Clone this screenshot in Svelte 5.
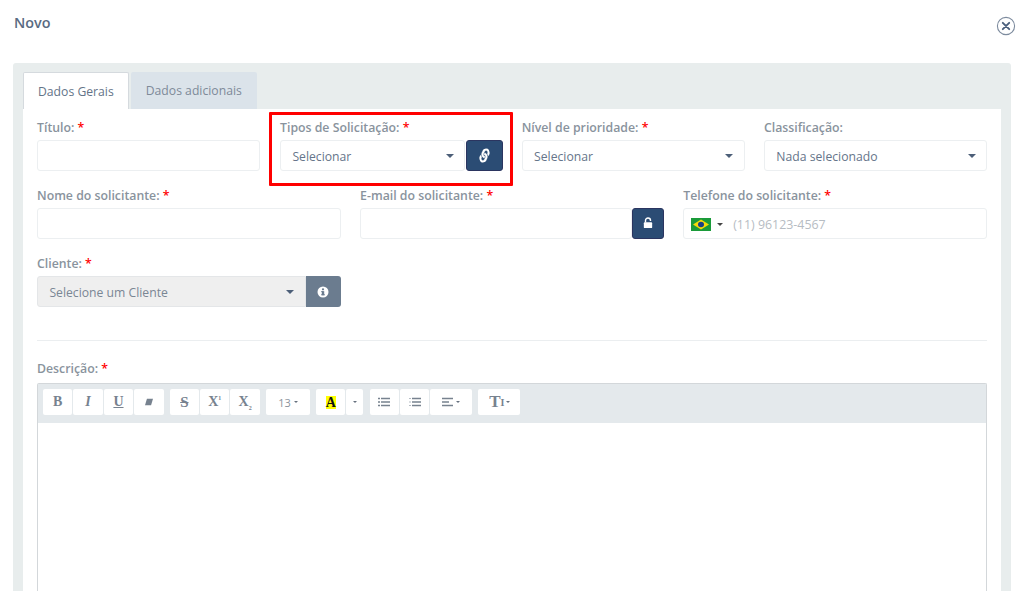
<script lang="ts">
  const rowTwo = [
    { label: 'Nome do solicitante:', kind: 'text' },
    { label: 'E-mail do solicitante:', kind: 'lock' },
    { label: 'Telefone do solicitante:', kind: 'phone' },
  ];
</script>

{#snippet caret()}
  <span class="caret"></span>
{/snippet}

{#snippet required(text: string)}
  <div class="label">{text} <span class="star">*</span></div>
{/snippet}

<div class="page">
  <header class="head">
    <h1>Novo</h1>
    <svg class="close" viewBox="0 0 20 20" width="20" height="20" aria-label="Fechar">
      <circle cx="10" cy="10" r="8.6" fill="none" stroke="#7d8b9e" stroke-width="1.1" />
      <path d="M6.8 6.8 13.2 13.2M13.2 6.8 6.8 13.2" stroke="#4a5f7c" stroke-width="1.9" stroke-linecap="round" />
    </svg>
  </header>

  <section class="panel">
    <nav class="tabs">
      <button class="tab active">Dados Gerais</button>
      <button class="tab">Dados adicionais</button>
    </nav>

    <div class="content">
      <div class="row four">
        <div class="field">
          {@render required('Título:')}
          <div class="input"></div>
        </div>
        <div class="field marked">
          {@render required('Tipos de Solicitação:')}
          <div class="group">
            <div class="input select"><span>Selecionar</span>{@render caret()}</div>
            <button class="addon dark" aria-label="Vincular">
              <svg class="chain" viewBox="0 0 512 512" width="13" height="13">
                <path fill="#fff" stroke="#fff" stroke-width="14" d="M326.6 185.4c59.7 59.8 58.9 155.7.4 214.6l-67.2 67.2c-59.3 59.3-155.7 59.3-215 0-59.3-59.3-59.3-155.7 0-215l37.1-37.1c9.8-9.8 26.8-3.3 27.3 10.6.6 17.7 3.8 35.5 9.7 52.7 2 5.8.6 12.3-3.8 16.6l-13.1 13.1c-28 28-28.9 73.7-1.2 102 28 28.6 74.1 28.7 102.3.5l67.2-67.2c28.2-28.2 28.1-73.8 0-101.8-3.7-3.7-7.4-6.6-10.3-8.6-4.2-2.9-6.8-7.6-7-12.7-.4-10.6 3.4-21.5 11.8-29.9l21-21c5.5-5.5 14.2-6.2 20.6-1.7 7.3 5.1 14.2 10.8 20.5 17.1zM467.5 44.4c-59.3-59.3-155.7-59.3-215 0L185.3 111.6c-.1.1-.3.3-.4.4-58.5 58.9-59.3 154.8.4 214.6 6.3 6.3 13.2 12 20.5 17.1 6.4 4.5 15.1 3.8 20.6-1.7l21-21c8.4-8.4 12.2-19.3 11.8-29.9-.2-5.1-2.8-9.8-7-12.7-2.9-2-6.6-4.9-10.3-8.6-28.1-28-28.2-73.6 0-101.8l67.2-67.2c28.2-28.2 74.3-28.1 102.3.5 27.7 28.3 26.8 74-1.2 102l-13.1 13.1c-4.4 4.3-5.8 10.8-3.8 16.6 5.9 17.2 9.1 35 9.7 52.7.5 13.9 17.5 20.4 27.3 10.6l37.1-37.1c59.3-59.3 59.3-155.7 0-215z" />
              </svg>
            </button>
          </div>
        </div>
        <div class="field">
          {@render required('Nível de prioridade:')}
          <div class="input select"><span>Selecionar</span>{@render caret()}</div>
        </div>
        <div class="field">
          <div class="label">Classificação:</div>
          <div class="input select"><span>Nada selecionado</span>{@render caret()}</div>
        </div>
      </div>

      <div class="row three">
        {#each rowTwo as f}
          <div class="field">
            {@render required(f.label)}
            {#if f.kind === 'text'}
              <div class="input"></div>
            {:else if f.kind === 'lock'}
              <div class="group">
                <div class="input"></div>
                <button class="addon dark lock" aria-label="Bloquear">
                  <svg viewBox="0 0 12 14" width="10" height="12">
                    <path fill="none" stroke="#fff" stroke-width="1.7" d="M3 6.5V4a3 3 0 0 1 6 0v.6" />
                    <rect x="1" y="6.2" width="10" height="6.8" rx="1" fill="#fff" />
                  </svg>
                </button>
              </div>
            {:else}
              <div class="input phone">
                <svg class="flag" viewBox="0 0 20 14" preserveAspectRatio="none">
                  <rect width="20" height="14" fill="#1a9b3a" />
                  <path d="M10 1.6 18 7 10 12.4 2 7z" fill="#f5d90a" />
                  <circle cx="10" cy="7" r="3" fill="#1b3f86" />
                </svg>
                <span class="caret small"></span>
                <span class="placeholder">(11) 96123-4567</span>
              </div>
            {/if}
          </div>
        {/each}
      </div>

      <div class="row three">
        <div class="field">
          {@render required('Cliente:')}
          <div class="group">
            <div class="input select disabled"><span>Selecione um Cliente</span>{@render caret()}</div>
            <button class="addon grey" aria-label="Informação">
              <svg viewBox="0 0 14 14" width="12" height="12">
                <circle cx="7" cy="7" r="6.4" fill="#fff" />
                <rect x="5.6" y="6" width="2.8" height="4.8" fill="#6b7c8f" />
                <rect x="4.9" y="9.6" width="4.2" height="1.2" fill="#6b7c8f" />
                <rect x="4.9" y="6" width="2" height="1.1" fill="#6b7c8f" />
                <circle cx="7" cy="3.9" r="1.3" fill="#6b7c8f" />
              </svg>
            </button>
          </div>
        </div>
      </div>

      <hr />

      {@render required('Descrição:')}
      <div class="editor">
        <div class="toolbar">
          <div class="btns">
            <button class="tb serif bold">B</button>
            <button class="tb serif italic">I</button>
            <button class="tb serif under">U</button>
            <button class="tb" aria-label="Limpar">
              <svg viewBox="0 0 12 10" width="10" height="8"><path fill="#77828f" d="M3.4 1H11L8.6 9H1z" /></svg>
            </button>
          </div>
          <div class="btns">
            <button class="tb serif strike">S</button>
            <button class="tb serif bold"><span>X<sup>1</sup></span></button>
            <button class="tb serif bold"><span>X<sub>2</sub></span></button>
          </div>
          <div class="btns">
            <button class="tb size"><span>13</span><span class="mini"></span></button>
          </div>
          <div class="btns">
            <button class="tb color"><span class="hl">A</span></button>
            <button class="tb narrow"><span class="mini"></span></button>
          </div>
          <div class="btns">
            <button class="tb" aria-label="Lista">
              <svg viewBox="0 0 12 10" width="12" height="10"><path stroke="#77828f" stroke-width="1.5" d="M0 1.5h2M3 1.5h9M0 5h2M3 5h9M0 8.5h2M3 8.5h9" /></svg>
            </button>
            <button class="tb" aria-label="Lista numerada">
              <svg viewBox="0 0 12 10" width="12" height="10"><path stroke="#77828f" stroke-width="1.5" d="M3 1.5h9M3 5h9M3 8.5h9" /><path stroke="#b4bbc3" stroke-width="1.2" d="M0 1.5h2M0 5h2M0 8.5h2" /></svg>
            </button>
            <button class="tb wide" aria-label="Alinhar">
              <svg viewBox="0 0 11 10" width="11" height="10"><path stroke="#77828f" stroke-width="1.5" d="M0 1.5h11M0 5h7M0 8.5h11" /></svg>
              <span class="mini"></span>
            </button>
          </div>
          <div class="btns">
            <button class="tb wide serif bold"><span class="tt">T</span><span class="updown">I</span><span class="mini"></span></button>
          </div>
        </div>
        <div class="body"></div>
      </div>
    </div>
  </section>
</div>

<style>
  :global(body) {
    margin: 0;
    background: #fff;
    font-family: 'Open Sans', 'Noto Sans', sans-serif;
    font-size: 12px;
    color: #6b7888;
  }

  .page {
    height: 591px;
    overflow: hidden;
    padding: 0 13px;
    box-sizing: border-box;
  }

  .head {
    display: flex;
    justify-content: space-between;
    align-items: flex-start;
    height: 63px;
  }

  h1 {
    margin: 13px 0 0 1px;
    font-size: 14.4px;
    line-height: 20px;
    font-weight: 600;
    color: #5a6b82;
  }

  .close {
    margin: 16px -5px 0 0;
  }

  .panel {
    background: #e8eded;
    border-radius: 3px 3px 0 0;
    padding: 9px 10px 0;
    height: 528px;
    box-sizing: border-box;
  }

  .tabs {
    display: flex;
    gap: 2px;
    height: 37px;
  }

  .tab {
    font: inherit;
    font-size: 12.2px;
    border: 0;
    padding: 0 15px;
    background: #dbe3ea;
    color: #7e8a99;
    border-radius: 2px 2px 0 0;
  }

  .tab.active {
    background: #fff;
    color: #647488;
    border: 1px solid #d5dade;
    border-bottom: 0;
    padding: 0 14px;
  }

  .content {
    background: #fff;
    padding: 10px 14px 0;
    height: 482px;
    box-sizing: border-box;
  }

  .row {
    display: grid;
    column-gap: 19.3px;
    margin-bottom: 16px;
  }

  .four {
    grid-template-columns: repeat(4, 1fr);
  }

  .three {
    grid-template-columns: repeat(3, 1fr);
  }

  .field {
    position: relative;
    min-width: 0;
  }

  .marked {
    margin: 0 -0.7px 0 0.7px;
  }

  .marked::after {
    content: '';
    position: absolute;
    left: -10.7px;
    right: -10px;
    top: -7px;
    bottom: -15px;
    border: 3px solid #f00;
    border-radius: 1px;
    pointer-events: none;
  }

  .label {
    font-weight: 600;
    font-size: 12.3px;
    line-height: 17px;
    height: 16px;
    margin-bottom: 5px;
    color: #89939d;
  }

  .star {
    color: #f00;
  }

  .input {
    flex: 1;
    min-width: 0;
    height: 31px;
    box-sizing: border-box;
    border: 1px solid #eceff1;
    border-radius: 3px;
    background: #fff;
    display: flex;
    align-items: center;
    color: #66758a;
    font-size: 12.2px;
    padding-top: 1px;
  }

  .select {
    justify-content: space-between;
    padding-left: 11.4px;
    padding-right: 11.4px;
  }

  .disabled {
    background: #efefef;
    border-color: #e4e6e8;
    border-radius: 3px 0 0 3px;
    color: #7a8694;
  }

  .group {
    display: flex;
  }

  .caret {
    width: 0;
    height: 0;
    border: 4px solid transparent;
    border-top-color: #4c5f78;
    border-bottom: 0;
    margin-right: -1px;
  }

  .caret.small {
    border-width: 3px;
    border-bottom: 0;
    border-top-color: #444;
    margin: 0 0 0 6px;
  }

  .addon {
    flex: none;
    width: 35px;
    height: 31px;
    padding: 0;
    display: flex;
    align-items: center;
    justify-content: center;
    border-radius: 3px;
  }

  .dark {
    margin-left: 1px;
    background: #2b4c74;
    border: 1px solid #2b3560;
    width: 37px;
  }

  .chain {
    transform: rotate(-15deg) scaleX(0.9);
  }

  .lock {
    width: 32px;
    margin-left: 0;
  }

  .lock svg {
    margin-top: -1px;
  }

  .grey {
    background: #6b7c8f;
    border: 0;
    border-radius: 0 3px 3px 0;
  }

  .phone {
    padding-left: 7px;
  }

  .flag {
    width: 20px;
    height: 13px;
  }

  .placeholder {
    margin-left: 10px;
    color: #b6bcc3;
    font-size: 12.4px;
  }

  hr {
    border: 0;
    border-top: 1px solid #ebeef0;
    margin: 33px 0 19px;
  }

  .editor {
    margin-top: 7px;
    border: 1px solid #d3d7da;
    border-bottom: 0;
    border-radius: 2px 2px 0 0;
  }

  .toolbar {
    background: #e4e9ec;
    height: 39px;
    box-sizing: border-box;
    padding: 5px;
    display: flex;
    gap: 6.1px;
  }

  .btns {
    display: flex;
    gap: 1px;
    height: 26px;
  }

  .tb {
    min-width: 29.4px;
    height: 26px;
    padding: 0;
    border: 0;
    background: #fff;
    border-radius: 2px;
    color: #77828f;
    font: inherit;
    font-size: 11px;
    display: flex;
    align-items: center;
    justify-content: center;
    gap: 3px;
  }

  .serif {
    font-family: 'Liberation Serif', serif;
    font-size: 14px;
  }

  .bold {
    font-weight: 700;
  }

  .italic {
    font-weight: 700;
    font-style: italic;
  }

  .under {
    font-weight: 700;
    text-decoration: underline;
  }

  .strike {
    font-weight: 700;
    font-size: 15px;
    text-decoration: line-through;
  }

  sup,
  sub {
    font-size: 6px;
    line-height: 0;
  }

  .size {
    width: 44px;
    color: #8a939d;
  }

  .hl {
    background: #ff0;
    color: #111;
    font-family: 'Liberation Serif', serif;
    font-weight: 700;
    font-size: 14px;
    line-height: 13px;
  }

  .narrow {
    min-width: 17px;
  }

  .wide {
    width: 42px;
  }

  .tt {
    font-size: 17px;
  }

  .updown {
    font-size: 10px;
    margin: 0 -2px 0 -3px;
  }

  .mini {
    width: 0;
    height: 0;
    border: 2.5px solid transparent;
    border-top-color: #66717f;
    border-bottom: 0;
  }

  .body {
    height: 200px;
  }
</style>
